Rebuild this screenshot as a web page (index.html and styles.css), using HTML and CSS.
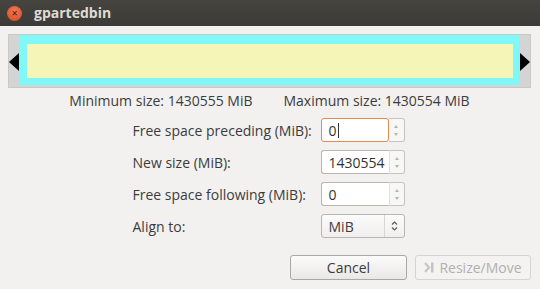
FILE: index.html
```html
<!DOCTYPE html>
<html lang="en">
<head>
  <meta charset="UTF-8" />
  <title>gpartedbin</title>
  <link rel="stylesheet" href="styles.css">
</head>
<body>
  <div class="window">
    <div class="titlebar">
      <span class="close">&#x2715;</span>
      <span class="title">gpartedbin</span>
    </div>

    <div class="content">
      <div class="partition">
        <div class="handle left"><span class="arrow-left"></span></div>
        <div class="used">
          <div class="fill"></div>
        </div>
        <div class="handle right"><span class="arrow-right"></span></div>
      </div>

      <div class="limits">
        <span>Minimum size: 1430555 MiB</span>
        <span>Maximum size: 1430554 MiB</span>
      </div>

      <div class="form">
        <label>Free space preceding (MiB):</label>
        <div class="spin">
          <div class="entry focus">0<span class="caret"></span></div>
          <div class="spin-btns"><span class="up"></span><span class="down"></span></div>
        </div>

        <label>New size (MiB):</label>
        <div class="spin">
          <div class="entry">1430554</div>
          <div class="spin-btns"><span class="up"></span><span class="down"></span></div>
        </div>

        <label>Free space following (MiB):</label>
        <div class="spin">
          <div class="entry">0</div>
          <div class="spin-btns"><span class="up"></span><span class="down"></span></div>
        </div>

        <label>Align to:</label>
        <div class="combo">
          <span class="combo-text">MiB</span>
          <span class="combo-arrows">
            <svg width="7" height="12" viewBox="0 0 7 12"><path d="M1 4.5 L3.5 2 L6 4.5" fill="none" stroke="#5a5a5a" stroke-width="1.2"/><path d="M1 7.5 L3.5 10 L6 7.5" fill="none" stroke="#5a5a5a" stroke-width="1.2"/></svg>
          </span>
        </div>
      </div>

      <div class="actions">
        <button class="btn">Cancel</button>
        <button class="btn disabled">
          <svg width="11" height="11" viewBox="0 0 11 11"><path d="M1 1 L5 5.5 L1 10" fill="none" stroke="#c4c4c4" stroke-width="2"/><rect x="7" y="0.5" width="2.5" height="10" fill="#c4c4c4"/></svg>
          Resize/Move
        </button>
      </div>
    </div>
  </div>
</body>
</html>
```

FILE: styles.css
```css
body {
  margin: 0;
  font-family: 'Open Sans', 'DejaVu Sans', sans-serif;
  font-size: 14px;
  color: #3c3c3c;
  background-color: #f2f1f0;
}

.window {
  width: 540px;
  height: 289px;
  display: flex;
  flex-direction: column;
  overflow: hidden;
}

.titlebar {
  height: 26px;
  background: linear-gradient(#45443f, #3b3a36);
  display: flex;
  align-items: center;
  padding-left: 7px;
  gap: 12px;
  box-sizing: border-box;
}

.close {
  width: 15px;
  height: 15px;
  border-radius: 50%;
  background: radial-gradient(circle at 50% 35%, #f27b56, #d9441c);
  color: #4a1a0a;
  font-size: 8px;
  font-weight: bold;
  display: flex;
  align-items: center;
  justify-content: center;
  line-height: 1;
}

.title {
  color: #dfdbd2;
  font-weight: bold;
  font-size: 14px;
  margin-top: -1px;
}

.content {
  flex: 1;
  padding: 8px 9px 0 8px;
  display: flex;
  flex-direction: column;
}

.partition {
  height: 52px;
  border: 1px solid #c9c9c7;
  display: flex;
  background: #d4d4d4;
}

.handle {
  width: 10px;
  display: flex;
  align-items: center;
}

.arrow-left,
.arrow-right {
  width: 0;
  height: 0;
  border-top: 9px solid transparent;
  border-bottom: 9px solid transparent;
  margin-top: 2px;
}

.arrow-left {
  border-right: 10px solid #000;
}

.arrow-right {
  border-left: 10px solid #000;
}

.used {
  flex: 1;
  background: #80f8f8;
  padding: 9px 7px 7px 8px;
  margin-bottom: 2px;
  display: flex;
}

.fill {
  flex: 1;
  background: #f5f5b8;
}

.limits {
  display: flex;
  justify-content: center;
  gap: 31px;
  margin-top: 3px;
  height: 18px;
  align-items: center;
}

.form {
  display: grid;
  grid-template-columns: 180px 84px;
  column-gap: 8px;
  row-gap: 8px;
  grid-auto-rows: 24px;
  justify-content: center;
  margin-top: 9px;
  padding-right: 2px;
}

.form label {
  display: flex;
  align-items: center;
  white-space: nowrap;
}

.spin {
  display: flex;
  height: 24px;
}

.entry {
  flex: 1;
  border: 1px solid #b8b6b2;
  border-right: none;
  border-radius: 3px 0 0 3px;
  background: #fff;
  display: flex;
  align-items: center;
  padding-left: 7px;
  color: #333;
}

.entry.focus {
  border: 1px solid #e28a52;
  border-radius: 3px;
}

.caret {
  width: 1px;
  height: 15px;
  background: #333;
  margin-left: 1px;
}

.spin-btns {
  width: 16px;
  border: 1px solid #c6c4c0;
  border-left: 1px solid #e2e0dc;
  border-radius: 0 3px 3px 0;
  background: #f7f7f6;
  display: flex;
  flex-direction: column;
  align-items: center;
  justify-content: space-around;
  padding: 3px 0;
  box-sizing: border-box;
}

.spin .entry.focus + .spin-btns {
  border-left: none;
}

.up,
.down {
  width: 0;
  height: 0;
  border-left: 2.5px solid transparent;
  border-right: 2.5px solid transparent;
}

.up {
  border-bottom: 3px solid #b5b5b5;
}

.down {
  border-top: 3px solid #b5b5b5;
}

.combo {
  display: flex;
  height: 24px;
  border: 1px solid #b8b6b2;
  border-radius: 3px;
  background: linear-gradient(#fbfbfb, #f0efee);
  box-sizing: border-box;
  align-items: stretch;
}

.combo-text {
  flex: 1;
  display: flex;
  align-items: center;
  padding-left: 7px;
  border-right: 1px solid #d8d6d2;
}

.combo-arrows {
  width: 19px;
  display: flex;
  align-items: center;
  justify-content: center;
}

.actions {
  display: flex;
  justify-content: flex-end;
  gap: 8px;
  margin-top: 17px;
}

.btn {
  width: 117px;
  height: 25px;
  font-family: inherit;
  font-size: 14px;
  color: #3c3c3c;
  border: 1px solid #aaa8a4;
  border-radius: 3px;
  background: linear-gradient(#fbfbfb, #e9e8e6);
  display: flex;
  align-items: center;
  justify-content: center;
  gap: 4px;
  padding: 0;
}

.btn.disabled {
  width: 116px;
  color: #b0b0b0;
  border-color: #d6d4d0;
  background: #f4f3f2;
}
```
